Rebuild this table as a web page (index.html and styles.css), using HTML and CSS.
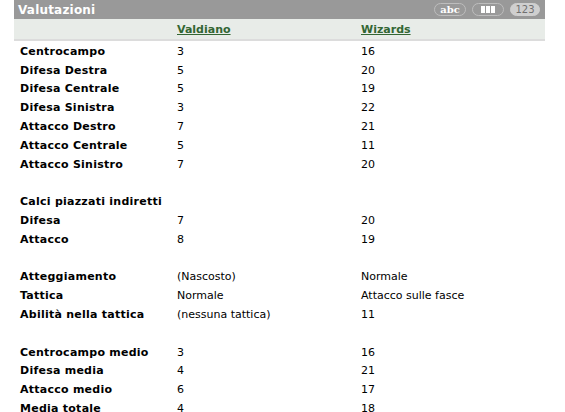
FILE: index.html
```html
<!DOCTYPE html>
<html>
<head>
<meta charset="utf-8">
<link rel="stylesheet" href="styles.css">
</head>
<body>
<div class="box">
  <div class="bar">
    <span class="title">Valutazioni</span>
    <div class="pills">
      <span class="pill">abc</span>
      <span class="pill bars"><i></i><i></i><i></i></span>
      <span class="pill on">123</span>
    </div>
  </div>
  <div class="sub">
    <span class="c1"></span>
    <a class="c2" href="#">Valdiano</a>
    <a class="c3" href="#">Wizards</a>
  </div>
  <div class="rows">
    <div class="row"><b class="c1">Centrocampo</b><span class="c2">3</span><span class="c3">16</span></div>
    <div class="row"><b class="c1">Difesa Destra</b><span class="c2">5</span><span class="c3">20</span></div>
    <div class="row"><b class="c1">Difesa Centrale</b><span class="c2">5</span><span class="c3">19</span></div>
    <div class="row"><b class="c1">Difesa Sinistra</b><span class="c2">3</span><span class="c3">22</span></div>
    <div class="row"><b class="c1">Attacco Destro</b><span class="c2">7</span><span class="c3">21</span></div>
    <div class="row"><b class="c1">Attacco Centrale</b><span class="c2">5</span><span class="c3">11</span></div>
    <div class="row"><b class="c1">Attacco Sinistro</b><span class="c2">7</span><span class="c3">20</span></div>
    <div class="row"></div>
    <div class="row"><b class="c1 wide">Calci piazzati indiretti</b></div>
    <div class="row"><b class="c1">Difesa</b><span class="c2">7</span><span class="c3">20</span></div>
    <div class="row"><b class="c1">Attacco</b><span class="c2">8</span><span class="c3">19</span></div>
    <div class="row"></div>
    <div class="row"><b class="c1">Atteggiamento</b><span class="c2">(Nascosto)</span><span class="c3">Normale</span></div>
    <div class="row"><b class="c1">Tattica</b><span class="c2">Normale</span><span class="c3">Attacco sulle fasce</span></div>
    <div class="row"><b class="c1">Abilità nella tattica</b><span class="c2">(nessuna tattica)</span><span class="c3">11</span></div>
    <div class="row"></div>
    <div class="row"><b class="c1">Centrocampo medio</b><span class="c2">3</span><span class="c3">16</span></div>
    <div class="row"><b class="c1">Difesa media</b><span class="c2">4</span><span class="c3">21</span></div>
    <div class="row"><b class="c1">Attacco medio</b><span class="c2">6</span><span class="c3">17</span></div>
    <div class="row"><b class="c1">Media totale</b><span class="c2">4</span><span class="c3">18</span></div>
  </div>
</div>
</body>
</html>
```
FILE: styles.css
```css
html, body {
  margin: 0;
  padding: 0;
  background: #fff;
}
body {
  font-family: "DejaVu Sans", Verdana, sans-serif;
  font-size: 11px;
  color: #000;
}
.box {
  margin-left: 14px;
  width: 531px;
}
.bar {
  height: 19px;
  background: #999999;
  display: flex;
  align-items: center;
  justify-content: space-between;
  padding: 0 5px 0 4px;
  box-sizing: border-box;
}
.title {
  color: #fff;
  font-weight: bold;
  font-size: 12px;
  letter-spacing: 0.2px;
}
.pills {
  display: flex;
  gap: 6px;
  align-items: center;
}
.pill {
  box-sizing: border-box;
  height: 13px;
  width: 32px;
  border: 1px solid #bdbdbd;
  border-radius: 7px;
  color: #fff;
  font-family: "DejaVu Serif", Verdana, serif;
  font-weight: bold;
  font-size: 10px;
  line-height: 11px;
  display: flex;
  align-items: center;
  justify-content: center;
}
.pill.bars {
  gap: 1px;
}
.pill.bars i {
  display: block;
  width: 4px;
  height: 7px;
  background: #fff;
}
.pill.on {
  background: #cfcfcf;
  border-color: #cfcfcf;
  color: #707070;
  font-weight: normal;
  font-family: "DejaVu Sans", Verdana, sans-serif;
  width: 30px;
}
.sub {
  height: 20px;
  background: #e8ece8;
  border-bottom: 2px solid #dcdcdc;
  display: flex;
  align-items: center;
  font-weight: bold;
}
.sub a {
  color: #336633;
  text-decoration: underline;
}
.c1 {
  width: 157px;
  padding-left: 6px;
  flex: none;
}
.c2 {
  width: 184px;
  flex: none;
}
.c3 {
  flex: 1;
}
.rows {
  padding-top: 1px;
}
.row {
  height: 18.8px;
  display: flex;
  align-items: center;
  white-space: nowrap;
}
.row b {
  font-weight: bold;
  letter-spacing: 0.25px;
}
.c1.wide {
  width: auto;
}
```
